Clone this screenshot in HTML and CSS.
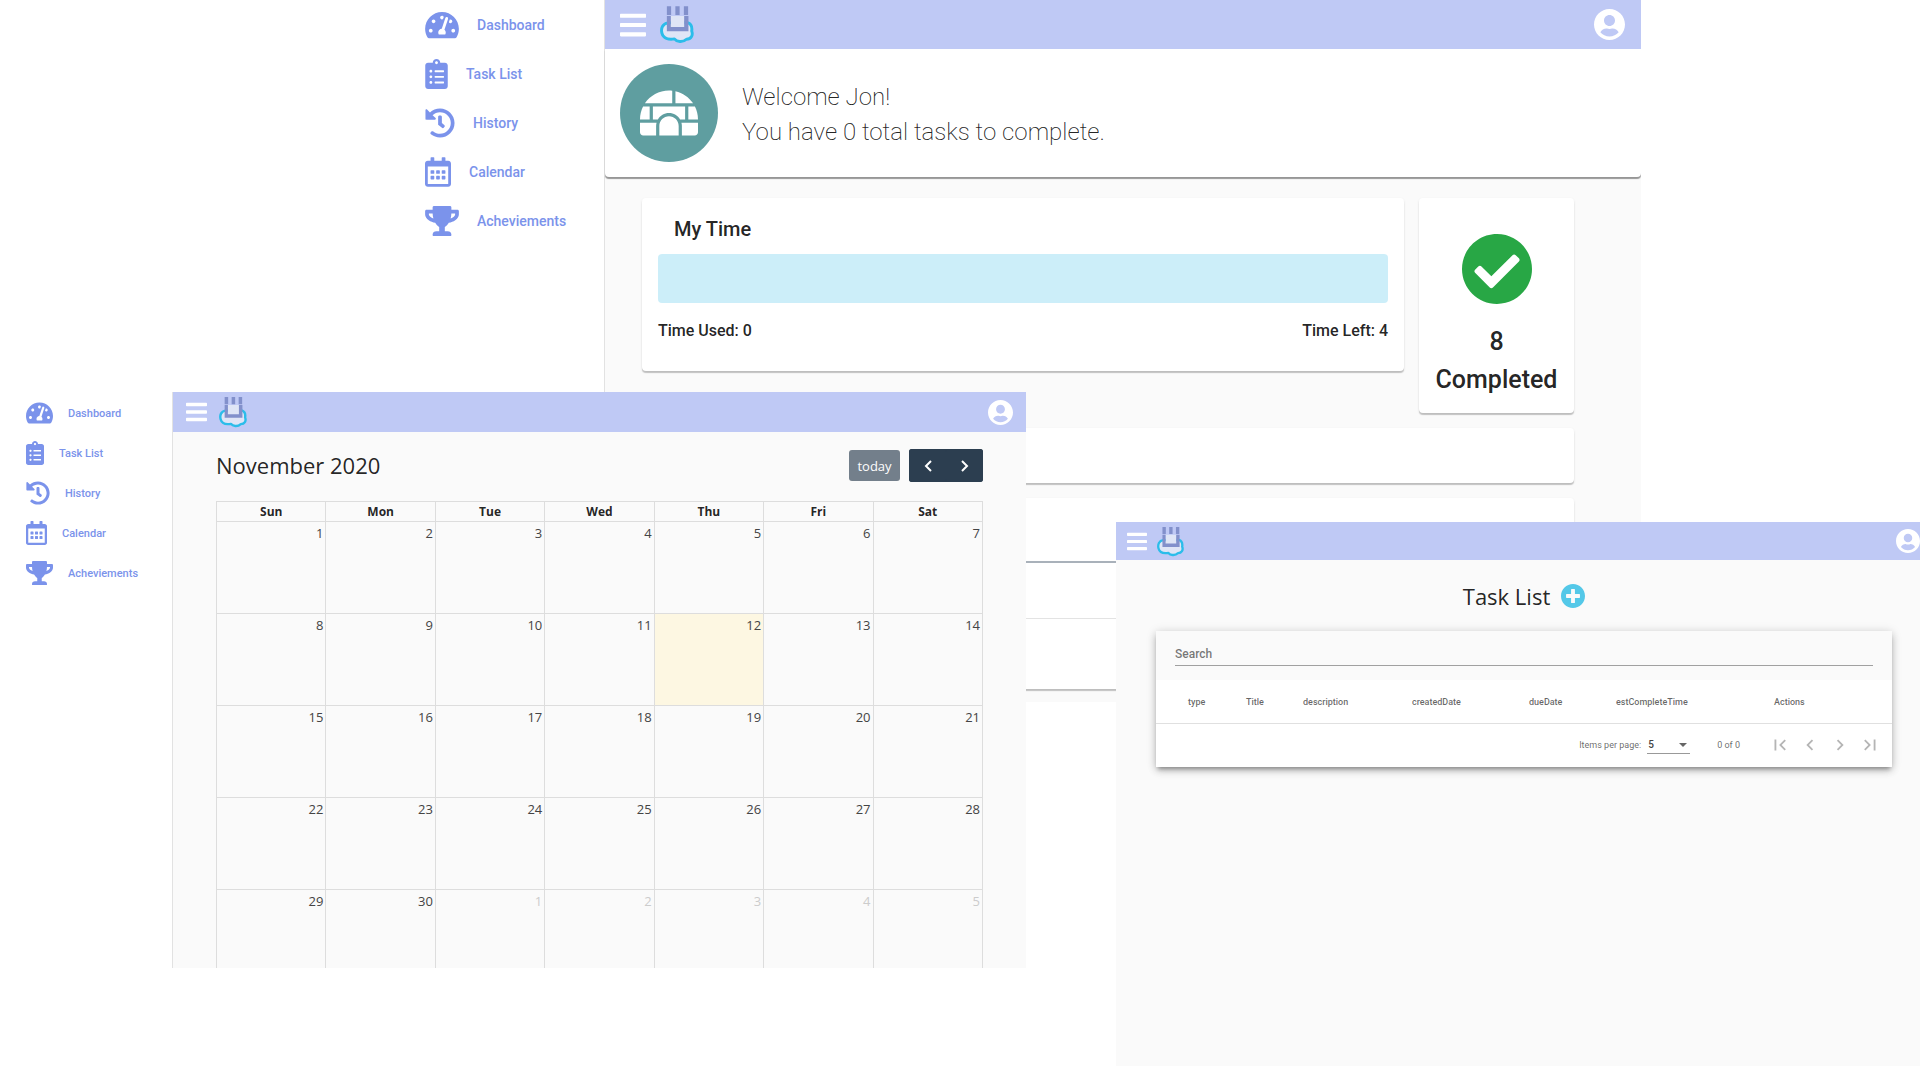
FILE: index.html
```html
<!DOCTYPE html>
<html lang="en">

<head>
    <meta charset="UTF-8">
    <meta name="viewport" content="width=device-width, initial-scale=1.0">
    <title>Task Planner</title>
    <link rel="stylesheet" href="styles.css">
</head>

<body>
    <!-- Icon sprite -->
    <svg class="sprite" aria-hidden="true">
        <symbol id="i-dashboard" viewBox="0 0 576 512"><path d="M288 32C128.94 32 0 160.94 0 320c0 52.8 14.25 102.26 39.06 144.8 5.61 9.62 16.3 15.2 27.44 15.2h443c11.14 0 21.83-5.58 27.44-15.2C561.75 422.26 576 372.8 576 320c0-159.06-128.94-288-288-288zm0 64c14.71 0 26.58 10.13 30.32 23.65-1.11 2.26-2.64 4.23-3.45 6.67l-9.22 27.67c-5.13 3.49-10.97 6.01-17.64 6.01-17.67 0-32-14.33-32-32S270.33 96 288 96zM96 384c-17.67 0-32-14.33-32-32s14.33-32 32-32 32 14.33 32 32-14.33 32-32 32zm48-160c-17.67 0-32-14.33-32-32s14.33-32 32-32 32 14.33 32 32-14.33 32-32 32zm246.77-72.41l-61.33 184C343.13 347.33 352 364.54 352 384c0 11.72-3.38 22.55-8.88 32H232.88c-5.5-9.45-8.88-20.28-8.88-32 0-33.94 26.5-61.43 59.9-63.59l61.34-184.01c4.17-12.56 17.73-19.45 30.36-15.17 12.57 4.19 19.35 17.79 15.17 30.36zm14.66 57.2l15.52-46.55c3.47-1.29 7.13-2.23 11.05-2.23 17.67 0 32 14.33 32 32s-14.33 32-32 32c-11.38-.01-20.89-6.28-26.57-15.22zM480 384c-17.67 0-32-14.33-32-32s14.33-32 32-32 32 14.33 32 32-14.33 32-32 32z"/></symbol>
        <symbol id="i-tasks" viewBox="0 0 384 512"><path d="M336 64h-80c0-35.3-28.7-64-64-64s-64 28.7-64 64H48C21.5 64 0 85.5 0 112v352c0 26.5 21.5 48 48 48h288c26.5 0 48-21.5 48-48V112c0-26.5-21.5-48-48-48zM96 424c-13.3 0-24-10.7-24-24s10.7-24 24-24 24 10.7 24 24-10.7 24-24 24zm0-96c-13.3 0-24-10.7-24-24s10.7-24 24-24 24 10.7 24 24-10.7 24-24 24zm0-96c-13.3 0-24-10.7-24-24s10.7-24 24-24 24 10.7 24 24-10.7 24-24 24zm96-192c13.3 0 24 10.7 24 24s-10.7 24-24 24-24-10.7-24-24 10.7-24 24-24zm128 368c0 4.4-3.6 8-8 8H168c-4.4 0-8-3.6-8-8v-16c0-4.4 3.6-8 8-8h144c4.4 0 8 3.6 8 8v16zm0-96c0 4.4-3.6 8-8 8H168c-4.4 0-8-3.6-8-8v-16c0-4.4 3.6-8 8-8h144c4.4 0 8 3.6 8 8v16zm0-96c0 4.4-3.6 8-8 8H168c-4.4 0-8-3.6-8-8v-16c0-4.4 3.6-8 8-8h144c4.4 0 8 3.6 8 8v16z"/></symbol>
        <symbol id="i-history" viewBox="0 0 512 512"><path d="M504 255.531c.253 136.64-111.18 248.372-247.82 248.468-59.015.042-113.223-20.53-155.822-54.911-11.077-8.94-11.905-25.541-1.839-35.607l11.267-11.267c8.609-8.609 22.353-9.551 31.891-1.984C173.062 425.135 212.781 440 256 440c101.705 0 184-82.311 184-184 0-101.705-82.311-184-184-184-48.814 0-93.149 18.969-126.068 49.932l50.754 50.754c10.08 10.08 2.941 27.314-11.313 27.314H24c-8.837 0-16-7.163-16-16V38.627c0-14.254 17.234-21.393 27.314-11.314l49.372 49.372C129.209 34.136 189.552 8 256 8c136.81 0 247.747 110.78 248 247.531zm-180.912 78.784l9.823-12.63c8.138-10.463 6.253-25.542-4.21-33.679L288 256.349V152c0-13.255-10.745-24-24-24h-16c-13.255 0-24 10.745-24 24v135.651l65.409 50.874c10.463 8.137 25.541 6.253 33.679-4.21z"/></symbol>
        <symbol id="i-calendar" viewBox="0 0 448 512"><path d="M148 288h-40c-6.6 0-12-5.4-12-12v-40c0-6.6 5.4-12 12-12h40c6.6 0 12 5.4 12 12v40c0 6.6-5.4 12-12 12zm108-12v-40c0-6.6-5.4-12-12-12h-40c-6.6 0-12 5.4-12 12v40c0 6.6 5.4 12 12 12h40c6.6 0 12-5.4 12-12zm96 0v-40c0-6.6-5.4-12-12-12h-40c-6.6 0-12 5.4-12 12v40c0 6.6 5.4 12 12 12h40c6.6 0 12-5.4 12-12zm-96 96v-40c0-6.6-5.4-12-12-12h-40c-6.6 0-12 5.4-12 12v40c0 6.6 5.4 12 12 12h40c6.6 0 12-5.4 12-12zm-96 0v-40c0-6.6-5.4-12-12-12h-40c-6.6 0-12 5.4-12 12v40c0 6.6 5.4 12 12 12h40c6.6 0 12-5.4 12-12zm192 0v-40c0-6.6-5.4-12-12-12h-40c-6.6 0-12 5.4-12 12v40c0 6.6 5.4 12 12 12h40c6.6 0 12-5.4 12-12zm96-260v352c0 26.5-21.5 48-48 48H48c-26.5 0-48-21.5-48-48V112c0-26.5 21.5-48 48-48h48V12c0-6.6 5.4-12 12-12h40c6.6 0 12 5.4 12 12v52h128V12c0-6.6 5.4-12 12-12h40c6.6 0 12 5.4 12 12v52h48c26.5 0 48 21.5 48 48zm-48 346V160H48v298c0 3.3 2.7 6 6 6h340c3.3 0 6-2.7 6-6z"/></symbol>
        <symbol id="i-trophy" viewBox="0 0 576 512"><path d="M552 64H448V24c0-13.3-10.7-24-24-24H152c-13.3 0-24 10.7-24 24v40H24C10.7 64 0 74.7 0 88v56c0 35.7 22.5 72.4 61.9 100.7 31.5 22.7 69.8 37.1 110 41.7C203.3 338.5 240 360 240 360v72h-48c-35.3 0-64 20.7-64 56v12c0 6.6 5.4 12 12 12h296c6.6 0 12-5.4 12-12v-12c0-35.3-28.7-56-64-56h-48v-72s36.7-21.5 68.1-73.6c40.3-4.6 78.6-19 110-41.7 39.3-28.3 61.9-65 61.9-100.7V88c0-13.3-10.7-24-24-24zM99.3 192.8C74.9 175.2 64 155.6 64 144v-16h64.2c1 32.6 5.8 61.2 12.8 86.2-15.1-5.2-29.2-12.4-41.7-21.4zM512 144c0 16.1-17.7 36.1-35.3 48.8-12.5 9-26.7 16.2-41.8 21.4 7-25 11.8-53.6 12.8-86.2H512v16z"/></symbol>
        <symbol id="i-bars" viewBox="0 0 448 512"><path d="M16 132h416c8.837 0 16-7.163 16-16V76c0-8.837-7.163-16-16-16H16C7.163 60 0 67.163 0 76v40c0 8.837 7.163 16 16 16zm0 160h416c8.837 0 16-7.163 16-16v-40c0-8.837-7.163-16-16-16H16c-8.837 0-16 7.163-16 16v40c0 8.837 7.163 16 16 16zm0 160h416c8.837 0 16-7.163 16-16v-40c0-8.837-7.163-16-16-16H16c-8.837 0-16 7.163-16 16v40c0 8.837 7.163 16 16 16z"/></symbol>
        <symbol id="i-user" viewBox="0 8 496 496"><path d="M248 8C111 8 0 119 0 256s111 248 248 248 248-111 248-248S385 8 248 8zm0 96c48.6 0 88 39.4 88 88s-39.4 88-88 88-88-39.4-88-88 39.4-88 88-88zm0 344c-58.7 0-111.3-26.6-146.5-68.2 18.8-35.4 55.6-59.8 98.5-59.8 2.4 0 4.8.4 7.1 1.1 13 4.2 26.6 6.9 40.9 6.9 14.3 0 28-2.7 40.9-6.9 2.3-.7 4.7-1.1 7.1-1.1 42.9 0 79.7 24.4 98.5 59.8C359.3 421.4 306.7 448 248 448z"/></symbol>
        <symbol id="i-check" viewBox="8 8 496 496"><path d="M504 256c0 136.967-111.033 248-248 248S8 392.967 8 256 119.033 8 256 8s248 111.033 248 248zM227.314 387.314l184-184c6.248-6.248 6.248-16.379 0-22.627l-22.627-22.627c-6.248-6.249-16.379-6.249-22.628 0L216 308.118l-70.059-70.059c-6.248-6.248-16.379-6.248-22.628 0l-22.627 22.627c-6.248 6.248-6.248 16.379 0 22.627l104 104c6.249 6.249 16.379 6.249 22.628.001z"/></symbol>
        <symbol id="i-plus" viewBox="8 8 496 496"><path d="M256 8C119 8 8 119 8 256s111 248 248 248 248-111 248-248S393 8 256 8zm144 276c0 6.6-5.4 12-12 12h-92v92c0 6.6-5.4 12-12 12h-56c-6.6 0-12-5.4-12-12v-92h-92c-6.6 0-12-5.4-12-12v-56c0-6.6 5.4-12 12-12h92v-92c0-6.6 5.4-12 12-12h56c6.6 0 12 5.4 12 12v92h92c6.6 0 12 5.4 12 12v56z"/></symbol>
        <symbol id="i-igloo" viewBox="0 0 576 512"><path d="M320 33.9c-10.5-1.2-21.2-1.9-32-1.9-99.8 0-187.8 50.8-239.4 128H320V33.9zM96 192H30.3C11.1 230.6 0 274 0 320h96V192zM352 39.4V160h175.4C487.2 99.9 424.8 55.9 352 39.4zM480 320h96c0-46-11.1-89.4-30.3-128H480v128zm-64 64v96h128c17.7 0 32-14.3 32-32v-96H411.5c2.6 10.3 4.5 20.9 4.5 32zm32-192H128v128h49.8c22.2-38.1 63-64 110.2-64s88 25.9 110.2 64H448V192zM0 448c0 17.7 14.3 32 32 32h128v-96c0-11.1 1.9-21.7 4.5-32H0v96zm288-160c-53 0-96 43-96 96v96h192v-96c0-53-43-96-96-96z"/></symbol>
        <symbol id="i-logo" viewBox="0 0 104 118">
            <path d="M24 54C8 56 2 71 6 86c4 15 20 20 38 17 7 9 25 12 37 1 14 0 21-12 16-25 2-14-3-23-13-26z" fill="#dfe5f6" stroke="#2bbdea" stroke-width="9" stroke-linejoin="round"/>
            <path d="M33 33h42v35H33z" fill="#dfe5f6"/>
            <path d="M21 3h13v27H21zM47 3h13v27H47zM73 3h13v27H73zM21 33h12v34h41V33h13v47H21z" fill="#8290cb"/>
        </symbol>
        <symbol id="i-first" viewBox="0 0 24 24"><path d="M18.41 16.59L13.82 12l4.59-4.59L17 6l-6 6 6 6zM6 6h2v12H6z"/></symbol>
        <symbol id="i-prev" viewBox="0 0 24 24"><path d="M15.41 7.41L14 6l-6 6 6 6 1.41-1.41L10.83 12z"/></symbol>
        <symbol id="i-next" viewBox="0 0 24 24"><path d="M10 6L8.59 7.41 13.17 12l-4.58 4.59L10 18l6-6z"/></symbol>
        <symbol id="i-last" viewBox="0 0 24 24"><path d="M5.59 7.41L10.18 12l-4.59 4.59L7 18l6-6-6-6zM16 6h2v12h-2z"/></symbol>
    </svg>

    <!-- Dashboard -->
    <section class="window dashboard">
        <nav class="sidebar">
            <a href="#"><svg class="wide"><use href="#i-dashboard"/></svg>Dashboard</a>
            <a href="#"><svg class="narrow"><use href="#i-tasks"/></svg>Task List</a>
            <a href="#"><svg class="square"><use href="#i-history"/></svg>History</a>
            <a href="#"><svg class="medium"><use href="#i-calendar"/></svg>Calendar</a>
            <a href="#"><svg class="wide"><use href="#i-trophy"/></svg>Acheviements</a>
        </nav>
        <main class="main">
            <header class="topbar">
                <button class="menu" aria-label="Menu"><svg><use href="#i-bars"/></svg></button>
                <svg class="logo"><use href="#i-logo"/></svg>
                <button class="user" aria-label="Account"><svg><use href="#i-user"/></svg></button>
            </header>
            <div class="welcome">
                <div class="avatar"><svg><use href="#i-igloo"/></svg></div>
                <p>Welcome Jon!<br>You have 0 total tasks to complete.</p>
            </div>
            <div class="cards">
                <div class="cards-row">
                    <div class="card time">
                        <h2>My Time</h2>
                        <div class="time-bar"></div>
                        <div class="time-labels">
                            <span>Time Used: 0</span>
                            <span>Time Left: 4</span>
                        </div>
                    </div>
                    <div class="card completed">
                        <svg><use href="#i-check"/></svg>
                        <p>8<br>Completed</p>
                    </div>
                </div>
                <div class="card strip"></div>
                <div class="card list">
                    <div class="list-head"></div>
                    <div class="list-row"></div>
                    <div class="list-foot"></div>
                </div>
            </div>
        </main>
    </section>

    <!-- Calendar -->
    <section class="window calendar">
        <nav class="sidebar">
            <a href="#"><svg class="wide"><use href="#i-dashboard"/></svg>Dashboard</a>
            <a href="#"><svg class="narrow"><use href="#i-tasks"/></svg>Task List</a>
            <a href="#"><svg class="square"><use href="#i-history"/></svg>History</a>
            <a href="#"><svg class="medium"><use href="#i-calendar"/></svg>Calendar</a>
            <a href="#"><svg class="wide"><use href="#i-trophy"/></svg>Acheviements</a>
        </nav>
        <main class="main">
            <header class="topbar">
                <button class="menu" aria-label="Menu"><svg><use href="#i-bars"/></svg></button>
                <svg class="logo"><use href="#i-logo"/></svg>
                <button class="user" aria-label="Account"><svg><use href="#i-user"/></svg></button>
            </header>
            <div class="month">
                <div class="month-bar">
                    <h2>November 2020</h2>
                    <button class="today-btn" disabled>today</button>
                    <div class="arrows">
                        <button aria-label="Previous month"><svg viewBox="0 0 10 14"><path d="M8 2L3 7l5 5"/></svg></button>
                        <button aria-label="Next month"><svg viewBox="0 0 10 14"><path d="M2 2l5 5-5 5"/></svg></button>
                    </div>
                </div>
                <table class="days">
                    <thead>
                        <tr><th>Sun</th><th>Mon</th><th>Tue</th><th>Wed</th><th>Thu</th><th>Fri</th><th>Sat</th></tr>
                    </thead>
                    <tbody>
                        <tr><td>1</td><td>2</td><td>3</td><td>4</td><td>5</td><td>6</td><td>7</td></tr>
                        <tr><td>8</td><td>9</td><td>10</td><td>11</td><td class="today">12</td><td>13</td><td>14</td></tr>
                        <tr><td>15</td><td>16</td><td>17</td><td>18</td><td>19</td><td>20</td><td>21</td></tr>
                        <tr><td>22</td><td>23</td><td>24</td><td>25</td><td>26</td><td>27</td><td>28</td></tr>
                        <tr><td>29</td><td>30</td><td class="other">1</td><td class="other">2</td><td class="other">3</td><td class="other">4</td><td class="other">5</td></tr>
                    </tbody>
                </table>
            </div>
        </main>
    </section>

    <!-- Task list -->
    <section class="window tasks">
        <main class="main">
            <header class="topbar">
                <button class="menu" aria-label="Menu"><svg><use href="#i-bars"/></svg></button>
                <svg class="logo"><use href="#i-logo"/></svg>
                <button class="user" aria-label="Account"><svg><use href="#i-user"/></svg></button>
            </header>
            <div class="tasks-title">
                <h2>Task List</h2>
                <button aria-label="Add task"><svg><use href="#i-plus"/></svg></button>
            </div>
            <div class="tasks-card">
                <div class="search">
                    <input type="text" placeholder="Search" aria-label="Search">
                </div>
                <table>
                    <colgroup>
                        <col class="c-type"><col class="c-title"><col class="c-desc"><col class="c-created">
                        <col class="c-due"><col class="c-est"><col>
                    </colgroup>
                    <thead>
                        <tr><th>type</th><th>Title</th><th>description</th><th>createdDate</th><th>dueDate</th><th>estCompleteTime</th><th>Actions</th></tr>
                    </thead>
                </table>
                <div class="paginator">
                    <label for="page-size">Items per page:</label>
                    <span class="page-size">
                        <select id="page-size">
                            <option>5</option>
                        </select>
                    </span>
                    <span class="range">0 of 0</span>
                    <button aria-label="First page"><svg><use href="#i-first"/></svg></button>
                    <button aria-label="Previous page"><svg><use href="#i-prev"/></svg></button>
                    <button aria-label="Next page"><svg><use href="#i-next"/></svg></button>
                    <button aria-label="Last page"><svg><use href="#i-last"/></svg></button>
                </div>
            </div>
        </main>
    </section>
</body>

</html>
```

FILE: styles.css
```css
* {
    box-sizing: border-box;
}

body {
    margin: 0;
    height: 100vh;
    position: relative;
    overflow: hidden;
    background: #fff;
    color: rgba(0, 0, 0, 0.87);
    font-family: Roboto, sans-serif;
}

h2,
p {
    margin: 0;
}

button {
    display: flex;
    align-items: center;
    justify-content: center;
    padding: 0;
    border: none;
    background: none;
    cursor: pointer;
}

svg {
    display: block;
    flex: none;
    fill: currentColor;
}

.sprite {
    position: absolute;
    width: 0;
    height: 0;
}

/* The three app windows on the page */
.window {
    position: absolute;
    display: flex;
    overflow: hidden;
}

.dashboard {
    top: 0;
    left: 401px;
    right: 279px;
}

.calendar {
    top: 392px;
    bottom: 112px;
    left: 0;
    right: 894px;
}

.tasks {
    top: 522px;
    bottom: 14px;
    left: 1116px;
    right: 0;
}

.main {
    flex: 1;
    min-width: 0;
    background: #fafafa;
}

.dashboard .main,
.calendar .main {
    border-left: 1px solid #e2e2e2;
}

/* Sidebar */
.sidebar {
    width: 203px;
    padding-left: 24px;
}

.sidebar a {
    display: flex;
    align-items: center;
    gap: 18px;
    height: 49px;
    color: #7b93eb;
    font-size: 14px;
    font-weight: 500;
    text-decoration: none;
}

.sidebar svg {
    height: 30px;
}

.sidebar .wide {
    width: 34px;
}

.sidebar .square {
    width: 30px;
}

.sidebar .medium {
    width: 26px;
}

.sidebar .narrow {
    width: 23px;
}

.calendar .sidebar {
    width: 172px;
    padding: 1px 0 0 26px;
}

.calendar .sidebar a {
    gap: 15px;
    height: 40px;
    font-size: 11px;
}

.calendar .sidebar svg {
    height: 24px;
}

.calendar .sidebar .wide {
    width: 27px;
}

.calendar .sidebar .square {
    width: 24px;
}

.calendar .sidebar .medium {
    width: 21px;
}

.calendar .sidebar .narrow {
    width: 18px;
}

/* Top bar */
.topbar {
    display: flex;
    align-items: center;
    height: 49px;
    padding: 0 16px 0 15px;
    background: #bfc9f5;
    color: #fff;
}

.topbar button {
    color: inherit;
}

.menu svg {
    width: 26px;
    height: 30px;
}

.logo {
    width: 34px;
    height: 39px;
    margin-left: 14px;
    overflow: visible;
}

.user {
    margin-left: auto;
}

.user svg {
    width: 31px;
    height: 31px;
}

.calendar .topbar {
    height: 40px;
    padding: 0 13px;
}

.calendar .menu svg {
    width: 21px;
    height: 24px;
}

.calendar .logo {
    width: 28px;
    height: 32px;
    margin-left: 12px;
}

.calendar .user svg {
    width: 25px;
    height: 25px;
}

.tasks .topbar {
    height: 38px;
    padding: 0 0 0 11px;
}

.tasks .menu svg {
    width: 20px;
    height: 23px;
}

.tasks .logo {
    width: 27px;
    height: 31px;
    margin-left: 10px;
}

.tasks .user svg {
    width: 24px;
    height: 24px;
}

/* Dashboard */
.welcome {
    display: flex;
    align-items: center;
    gap: 24px;
    padding: 15px;
    background: #fff;
    border-radius: 0 0 4px 4px;
    box-shadow: 0 2px 1px rgba(0, 0, 0, 0.4);
    font-size: 24px;
    font-weight: 200;
    line-height: 35px;
}

.welcome p {
    padding-top: 4px;
}

.avatar {
    display: flex;
    align-items: center;
    justify-content: center;
    width: 98px;
    height: 98px;
    border-radius: 50%;
    background: #5f9ea0;
    color: #fff;
}

.avatar svg {
    width: 58px;
    height: 52px;
}

.cards {
    display: flex;
    flex-direction: column;
    gap: 15px;
    padding: 21px 67px 13px 37px;
}

.cards-row {
    display: flex;
    align-items: flex-start;
    gap: 15px;
}

.card {
    background: #fff;
    border-radius: 4px;
    box-shadow: 0 2px 1px rgba(0, 0, 0, 0.2), 0 1px 3px rgba(0, 0, 0, 0.08);
}

.time {
    flex: 1;
    padding: 15px 16px 28px;
    font-size: 16px;
    font-weight: 500;
}

.time h2 {
    padding-left: 16px;
    font-size: 20px;
    font-weight: 500;
    line-height: 32px;
}

.time-bar {
    height: 49px;
    margin: 9px 0 15px;
    border-radius: 4px;
    background: #cceef9;
}

.time-labels {
    display: flex;
    justify-content: space-between;
    line-height: 25px;
}

.completed {
    display: flex;
    flex-direction: column;
    align-items: center;
    gap: 19px;
    width: 155px;
    padding: 36px 0 14px;
    font-size: 25px;
    font-weight: 500;
    line-height: 38px;
    text-align: center;
}

.completed svg {
    width: 70px;
    height: 70px;
    color: #28a745;
}

.strip {
    height: 55px;
}

.list-head {
    height: 65px;
    border-bottom: 2px solid #a9b1ba;
}

.list-row {
    height: 56px;
    border-bottom: 1px solid #e3e3e3;
}

.list-foot {
    height: 70px;
}

/* Calendar */
.month {
    padding: 17px 43px 0 43px;
    font-family: "Open Sans", sans-serif;
}

.month-bar {
    display: flex;
    align-items: center;
    margin-bottom: 19px;
}

.month-bar h2 {
    flex: 1;
    font-size: 22px;
    font-weight: 400;
    line-height: 33px;
}

.month-bar button {
    height: 31px;
    border-radius: 3px;
    background: #2c3e50;
    color: #fff;
    font-family: inherit;
    font-size: 13px;
}

.month-bar .today-btn {
    width: 51px;
    margin-right: 9px;
    opacity: 0.65;
}

.month-bar .arrows {
    display: flex;
    border-radius: 3px;
    background: #2c3e50;
}

.arrows button {
    width: 37px;
    height: 33px;
}

.arrows svg {
    width: 10px;
    height: 14px;
    fill: none;
    stroke: currentColor;
    stroke-width: 2;
}

.days {
    width: 100%;
    table-layout: fixed;
    border-collapse: collapse;
    font-size: 13px;
}

.days th,
.days td {
    padding: 0;
    border: 1px solid #ddd;
}

.days th {
    height: 20px;
    font-size: 12px;
    line-height: 18px;
}

.days td {
    height: 92px;
    padding: 2px 2px 0 0;
    color: #444;
    line-height: 18px;
    text-align: right;
    vertical-align: top;
}

.days .today {
    background: #fdf7e2;
}

.days .other {
    color: #ccc;
}

/* Task list */
.tasks-title {
    display: flex;
    align-items: center;
    justify-content: center;
    gap: 11px;
    padding: 21px 0 20px 12px;
}

.tasks-title h2 {
    font-family: "Open Sans", sans-serif;
    font-size: 22px;
    font-weight: 400;
    line-height: 30px;
}

.tasks-title svg {
    width: 24px;
    height: 24px;
    color: #54c8e8;
}

.tasks-card {
    margin: 0 28px 0 40px;
    background: #fff;
    box-shadow: 0 4px 4px -2px rgba(0, 0, 0, 0.3), 0 4px 8px rgba(0, 0, 0, 0.16), 0 1px 10px rgba(0, 0, 0, 0.14);
    color: rgba(0, 0, 0, 0.6);
    font-size: 9px;
}

.search {
    padding: 12px 19px 14px;
    background: #fafafa;
}

.search input {
    display: block;
    width: 100%;
    height: 23px;
    padding: 0;
    border: none;
    border-bottom: 1px solid #a0a0a0;
    background: none;
    font-family: inherit;
    font-size: 12px;
    font-weight: 500;
    outline: none;
}

.search input::placeholder {
    color: rgba(0, 0, 0, 0.54);
}

.tasks-card table {
    width: 100%;
    table-layout: fixed;
    border-collapse: collapse;
}

.tasks-card th {
    height: 43px;
    padding: 2px 0 0;
    border-bottom: 1px solid #e0e0e0;
    font-weight: 500;
    text-align: left;
}

.tasks-card th:first-child {
    padding-left: 32px;
}

.c-type {
    width: 90px;
}

.c-title {
    width: 57px;
}

.c-desc {
    width: 109px;
}

.c-created {
    width: 117px;
}

.c-due {
    width: 87px;
}

.c-est {
    width: 158px;
}

.paginator {
    display: flex;
    align-items: center;
    justify-content: flex-end;
    height: 43px;
    padding-right: 7px;
}

.page-size {
    position: relative;
    margin: 0 27px 0 6px;
}

/* drop-down arrow */
.page-size::after {
    content: "";
    position: absolute;
    top: 6px;
    right: 3px;
    border: 4px solid transparent;
    border-top-color: #666;
    border-bottom: none;
    pointer-events: none;
}

.page-size select {
    display: block;
    appearance: none;
    width: 43px;
    height: 17px;
    padding: 0 1px;
    border: none;
    border-bottom: 1px solid #999;
    border-radius: 0;
    background: none;
    color: #444;
    font-family: inherit;
    font-size: 10px;
    font-weight: 500;
}

.range {
    margin-right: 25px;
}

.paginator button {
    width: 30px;
    height: 30px;
    color: #b5b5b5;
}

.paginator button svg {
    width: 22px;
    height: 22px;
}
```
